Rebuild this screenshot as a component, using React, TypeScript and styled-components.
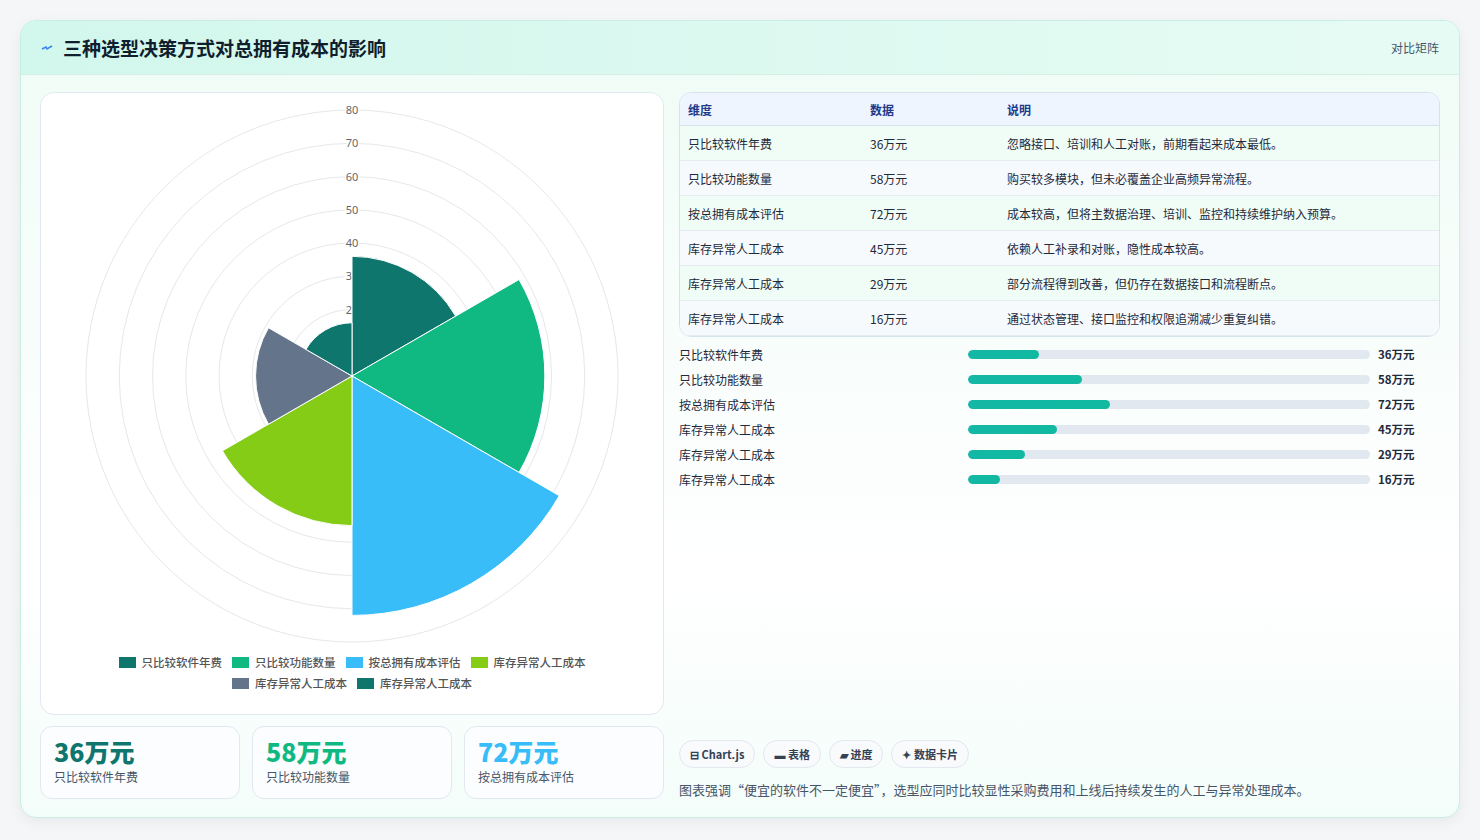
import React from "react";
import styled, { createGlobalStyle } from "styled-components";

const G = createGlobalStyle`
  body{margin:0;background:#f4f6f8;font-family:"Noto Sans CJK SC","Noto Sans",sans-serif;}
`;
const Page = styled.div`padding:20px 20px 22px 20px;`;
const Card = styled.div`
  height:798px;box-sizing:border-box;border:1px solid #c9efe3;border-radius:16px;overflow:hidden;
  background:linear-gradient(180deg,#effcf6 0%,#ffffff 70%,#f3fdf9 100%);
  box-shadow:0 4px 14px rgba(15,23,42,.06);display:flex;flex-direction:column;`;
const Header = styled.div`
  height:55px;box-sizing:border-box;display:flex;align-items:center;justify-content:space-between;
  padding:0 20px 0 20px;background:linear-gradient(90deg,#d2f7ec,#e6fbf4);border-bottom:1px solid #d5efe6;`;
const Title = styled.h1`margin:0;font-size:19px;font-weight:700;color:#0f1f2e;display:flex;align-items:center;gap:10px;`;
const HRight = styled.span`font-size:12px;color:#475569;`;
const Body = styled.div`flex:1;display:grid;grid-template-columns:624px 1fr;gap:15px;padding:17px 19px 18px 19px;`;
const Left = styled.div`display:flex;flex-direction:column;gap:11px;`;
const ChartCard = styled.div`height:623px;box-sizing:border-box;border:1px solid #e2e8f0;border-radius:14px;background:#fff;
  display:flex;flex-direction:column;align-items:center;padding-top:10px;`;
const Legend = styled.div`display:flex;flex-wrap:wrap;justify-content:center;gap:5px 10px;width:520px;margin-top:5px;`;
const LItem = styled.span`display:flex;align-items:center;gap:6px;font-size:11.5px;font-weight:500;color:#555;`;
const Sw = styled.i<{c:string}>`width:17px;height:11px;background:${p=>p.c};display:inline-block;`;
const Kpis = styled.div`display:grid;grid-template-columns:repeat(3,1fr);gap:12px;`;
const Kpi = styled.div`height:73px;box-sizing:border-box;border:1px solid #e2e8f0;border-radius:12px;background:#fbfdff;padding:9px 13px;`;
const KV = styled.div<{c:string}>`font-size:25px;font-weight:800;color:${p=>p.c};line-height:30px;`;
const KL = styled.div`font-size:12px;color:#475569;margin-top:2px;`;
const Right = styled.div`display:flex;flex-direction:column;`;
const Table = styled.table`width:100%;border-collapse:separate;border-spacing:0;border:1px solid #d6e2ee;border-radius:12px;overflow:hidden;font-size:12px;color:#1e293b;`;
const Th = styled.th`text-align:left;font-weight:600;color:#1e3a8a;background:#eef5ff;height:32px;padding:0 8px;border-bottom:1px solid #d6e2ee;`;
const Td = styled.td<{alt?:boolean}>`height:34px;padding:0 8px;border-bottom:1px solid #e5edf2;background:${p=>p.alt?"#f7fafc":"#f0fdf6"};`;
const Bars = styled.div`display:flex;flex-direction:column;gap:7px;margin-top:8px;`;
const BarRow = styled.div`display:grid;grid-template-columns:289px 402px 1fr;align-items:center;height:18px;font-size:12px;color:#1e293b;`;
const Track = styled.div`height:9px;border-radius:5px;background:#e2e8f0;overflow:hidden;`;
const Fill = styled.div`height:100%;border-radius:5px;background:linear-gradient(90deg,#14b8a6,#10b9a0);`;
const BV = styled.span`font-weight:700;font-size:11.5px;padding-left:8px;`;
const Spacer = styled.div`flex:1;`;
const Tags = styled.div`display:flex;gap:8px;`;
const Tag = styled.span`height:28px;box-sizing:border-box;padding:0 10px;border:1px solid #e2e8f0;border-radius:14px;background:#f8fafc;
  display:flex;align-items:center;gap:4px;font-size:11px;font-weight:600;color:#334155;`;
const Foot = styled.p`margin:12px 0 0;font-size:13px;color:#475569;`;

const data = [
  {l:"只比较软件年费",v:36,c:"#0f766e",d:"忽略接口、培训和人工对账，前期看起来成本最低。"},
  {l:"只比较功能数量",v:58,c:"#10b981",d:"购买较多模块，但未必覆盖企业高频异常流程。"},
  {l:"按总拥有成本评估",v:72,c:"#38bdf8",d:"成本较高，但将主数据治理、培训、监控和持续维护纳入预算。"},
  {l:"库存异常人工成本",v:45,c:"#84cc16",d:"依赖人工补录和对账，隐性成本较高。"},
  {l:"库存异常人工成本",v:29,c:"#64748b",d:"部分流程得到改善，但仍存在数据接口和流程断点。"},
  {l:"库存异常人工成本",v:16,c:"#0f766e",d:"通过状态管理、接口监控和权限追溯减少重复纠错。"},
];

function Polar(){
  const cx=312,cy=273,u=266/80;
  const pt=(r:number,a:number)=>[cx+r*Math.cos(a),cy+r*Math.sin(a)];
  return (
    <svg width="624" height="546" viewBox="0 0 624 546">
      {[1,2,3,4,5,6,7,8].map(i=><circle key={i} cx={cx} cy={cy} r={i*10*u} fill="none" stroke="#e5e7eb"/>)}
      {[1,2,3,4,5,6,7,8].map(i=><text key={i} x={cx} y={cy-i*10*u+4} textAnchor="middle" fontSize="11" fill="#666"
        fontFamily="Noto Sans" stroke="#fff" strokeWidth="3" paintOrder="stroke">{i*10}</text>)}
      {data.map((d,i)=>{
        const a0=-Math.PI/2+i*Math.PI/3,a1=a0+Math.PI/3,r=d.v*u;
        const [x0,y0]=pt(r,a0),[x1,y1]=pt(r,a1);
        return <path key={i} d={`M${cx} ${cy}L${x0} ${y0}A${r} ${r} 0 0 1 ${x1} ${y1}Z`} fill={d.c} stroke="#fff" strokeWidth="1"/>;
      })}
    </svg>
  );
}

export default function App(){
  return (<><G/><Page><Card>
    <Header>
      <Title><svg width="12" height="8" viewBox="0 0 12 8"><path d="M1 5 L5 3 L6 5 L11 2" stroke="#3b82f6" strokeWidth="1.5" fill="none"/></svg>三种选型决策方式对总拥有成本的影响</Title>
      <HRight>对比矩阵</HRight>
    </Header>
    <Body>
      <Left>
        <ChartCard>
          <Polar/>
          <Legend>{data.map((d,i)=><LItem key={i}><Sw c={d.c}/>{d.l}</LItem>)}</Legend>
        </ChartCard>
        <Kpis>
          {data.slice(0,3).map((d,i)=><Kpi key={i}><KV c={d.c}>{d.v}万元</KV><KL>{d.l}</KL></Kpi>)}
        </Kpis>
      </Left>
      <Right>
        <Table>
          <thead><tr><Th style={{width:166}}>维度</Th><Th style={{width:121}}>数据</Th><Th>说明</Th></tr></thead>
          <tbody>{data.map((d,i)=><tr key={i}><Td alt={i%2==1}>{d.l}</Td><Td alt={i%2==1}>{d.v}万元</Td><Td alt={i%2==1}>{d.d}</Td></tr>)}</tbody>
        </Table>
        <Bars>{data.map((d,i)=><BarRow key={i}><span>{d.l}</span><Track><Fill style={{width:`${d.v/204*100}%`}}/></Track><BV>{d.v}万元</BV></BarRow>)}</Bars>
        <Spacer/>
        <Tags><Tag>⊟ Chart.js</Tag><Tag>▬ 表格</Tag><Tag>▰ 进度</Tag><Tag>✦ 数据卡片</Tag></Tags>
        <Foot>图表强调“便宜的软件不一定便宜”，选型应同时比较显性采购费用和上线后持续发生的人工与异常处理成本。</Foot>
      </Right>
    </Body>
  </Card></Page></>);
}
